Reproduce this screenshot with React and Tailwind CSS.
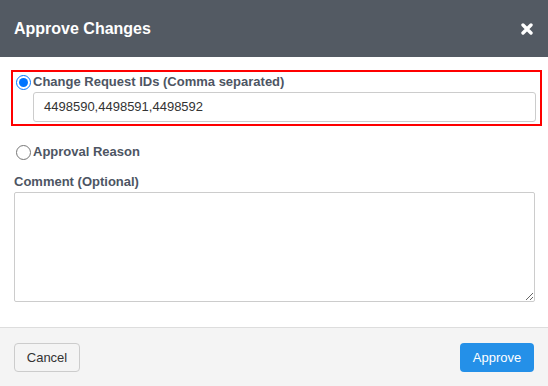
export default function App() {
  return (
    <div className="w-[548px] h-[386px] bg-white flex flex-col font-['Liberation_Sans',Arial,sans-serif] overflow-hidden">
      <div className="h-[57px] bg-[#535a63] flex items-center justify-between pl-[14px] pr-[15px] shrink-0">
        <div className="text-white font-bold text-[16px] leading-none">Approve Changes</div>
        <svg width="12" height="12" viewBox="0 0 12 12" className="mt-[1px]">
          <path d="M2 2 L10 10 M10 2 L2 10" stroke="white" strokeWidth="3.4" strokeLinecap="round" />
        </svg>
      </div>
      <div className="flex-1 flex flex-col pt-[13px]">
        <div className="ml-[11px] mr-[6px] border-2 border-[#ff0000] pl-[3px] pr-[4px] pt-[1px] pb-[2px]">
          <label className="flex items-center h-[18px]">
            <input type="radio" defaultChecked name="mode" className="w-[15px] h-[15px] m-0 mr-[2px] accent-[#0075ff]" />
            <span className="text-[13px] font-bold text-[#4d5563]">Change Request IDs (Comma separated)</span>
          </label>
          <div className="pl-[17px] mt-[1px]">
            <div className="h-[30px] border border-[#cccccc] rounded-[3px] flex items-center pl-[10px] text-[13px] text-[#333333]">
              4498590,4498591,4498592
            </div>
          </div>
        </div>
        <label className="flex items-center mt-[17px] ml-[16px] h-[18px]">
          <input type="radio" name="mode" className="w-[15px] h-[15px] m-0 mr-[2px] accent-[#0075ff]" />
          <span className="text-[13px] font-bold text-[#4d5563]">Approval Reason</span>
        </label>
        <div className="ml-[14px] mt-[13px] text-[13px] font-bold text-[#4d5563] leading-[16px]">Comment (Optional)</div>
        <textarea className="mx-[14px] mt-[2px] h-[110px] w-[521px] border border-[#cccccc] rounded-[2px] resize-y outline-none" />
      </div>
      <div className="h-[59px] shrink-0 bg-[#f4f4f4] border-t border-[#dddddd] flex items-start justify-between px-[14px] pt-[15px]">
        <button className="h-[29px] w-[66px] border border-[#cccccc] rounded-[4px] bg-[#f4f4f4] text-[13px] text-[#333333]">Cancel</button>
        <button className="h-[29px] w-[74px] rounded-[4px] bg-[#2490e8] text-[13px] text-white">Approve</button>
      </div>
    </div>
  );
}
